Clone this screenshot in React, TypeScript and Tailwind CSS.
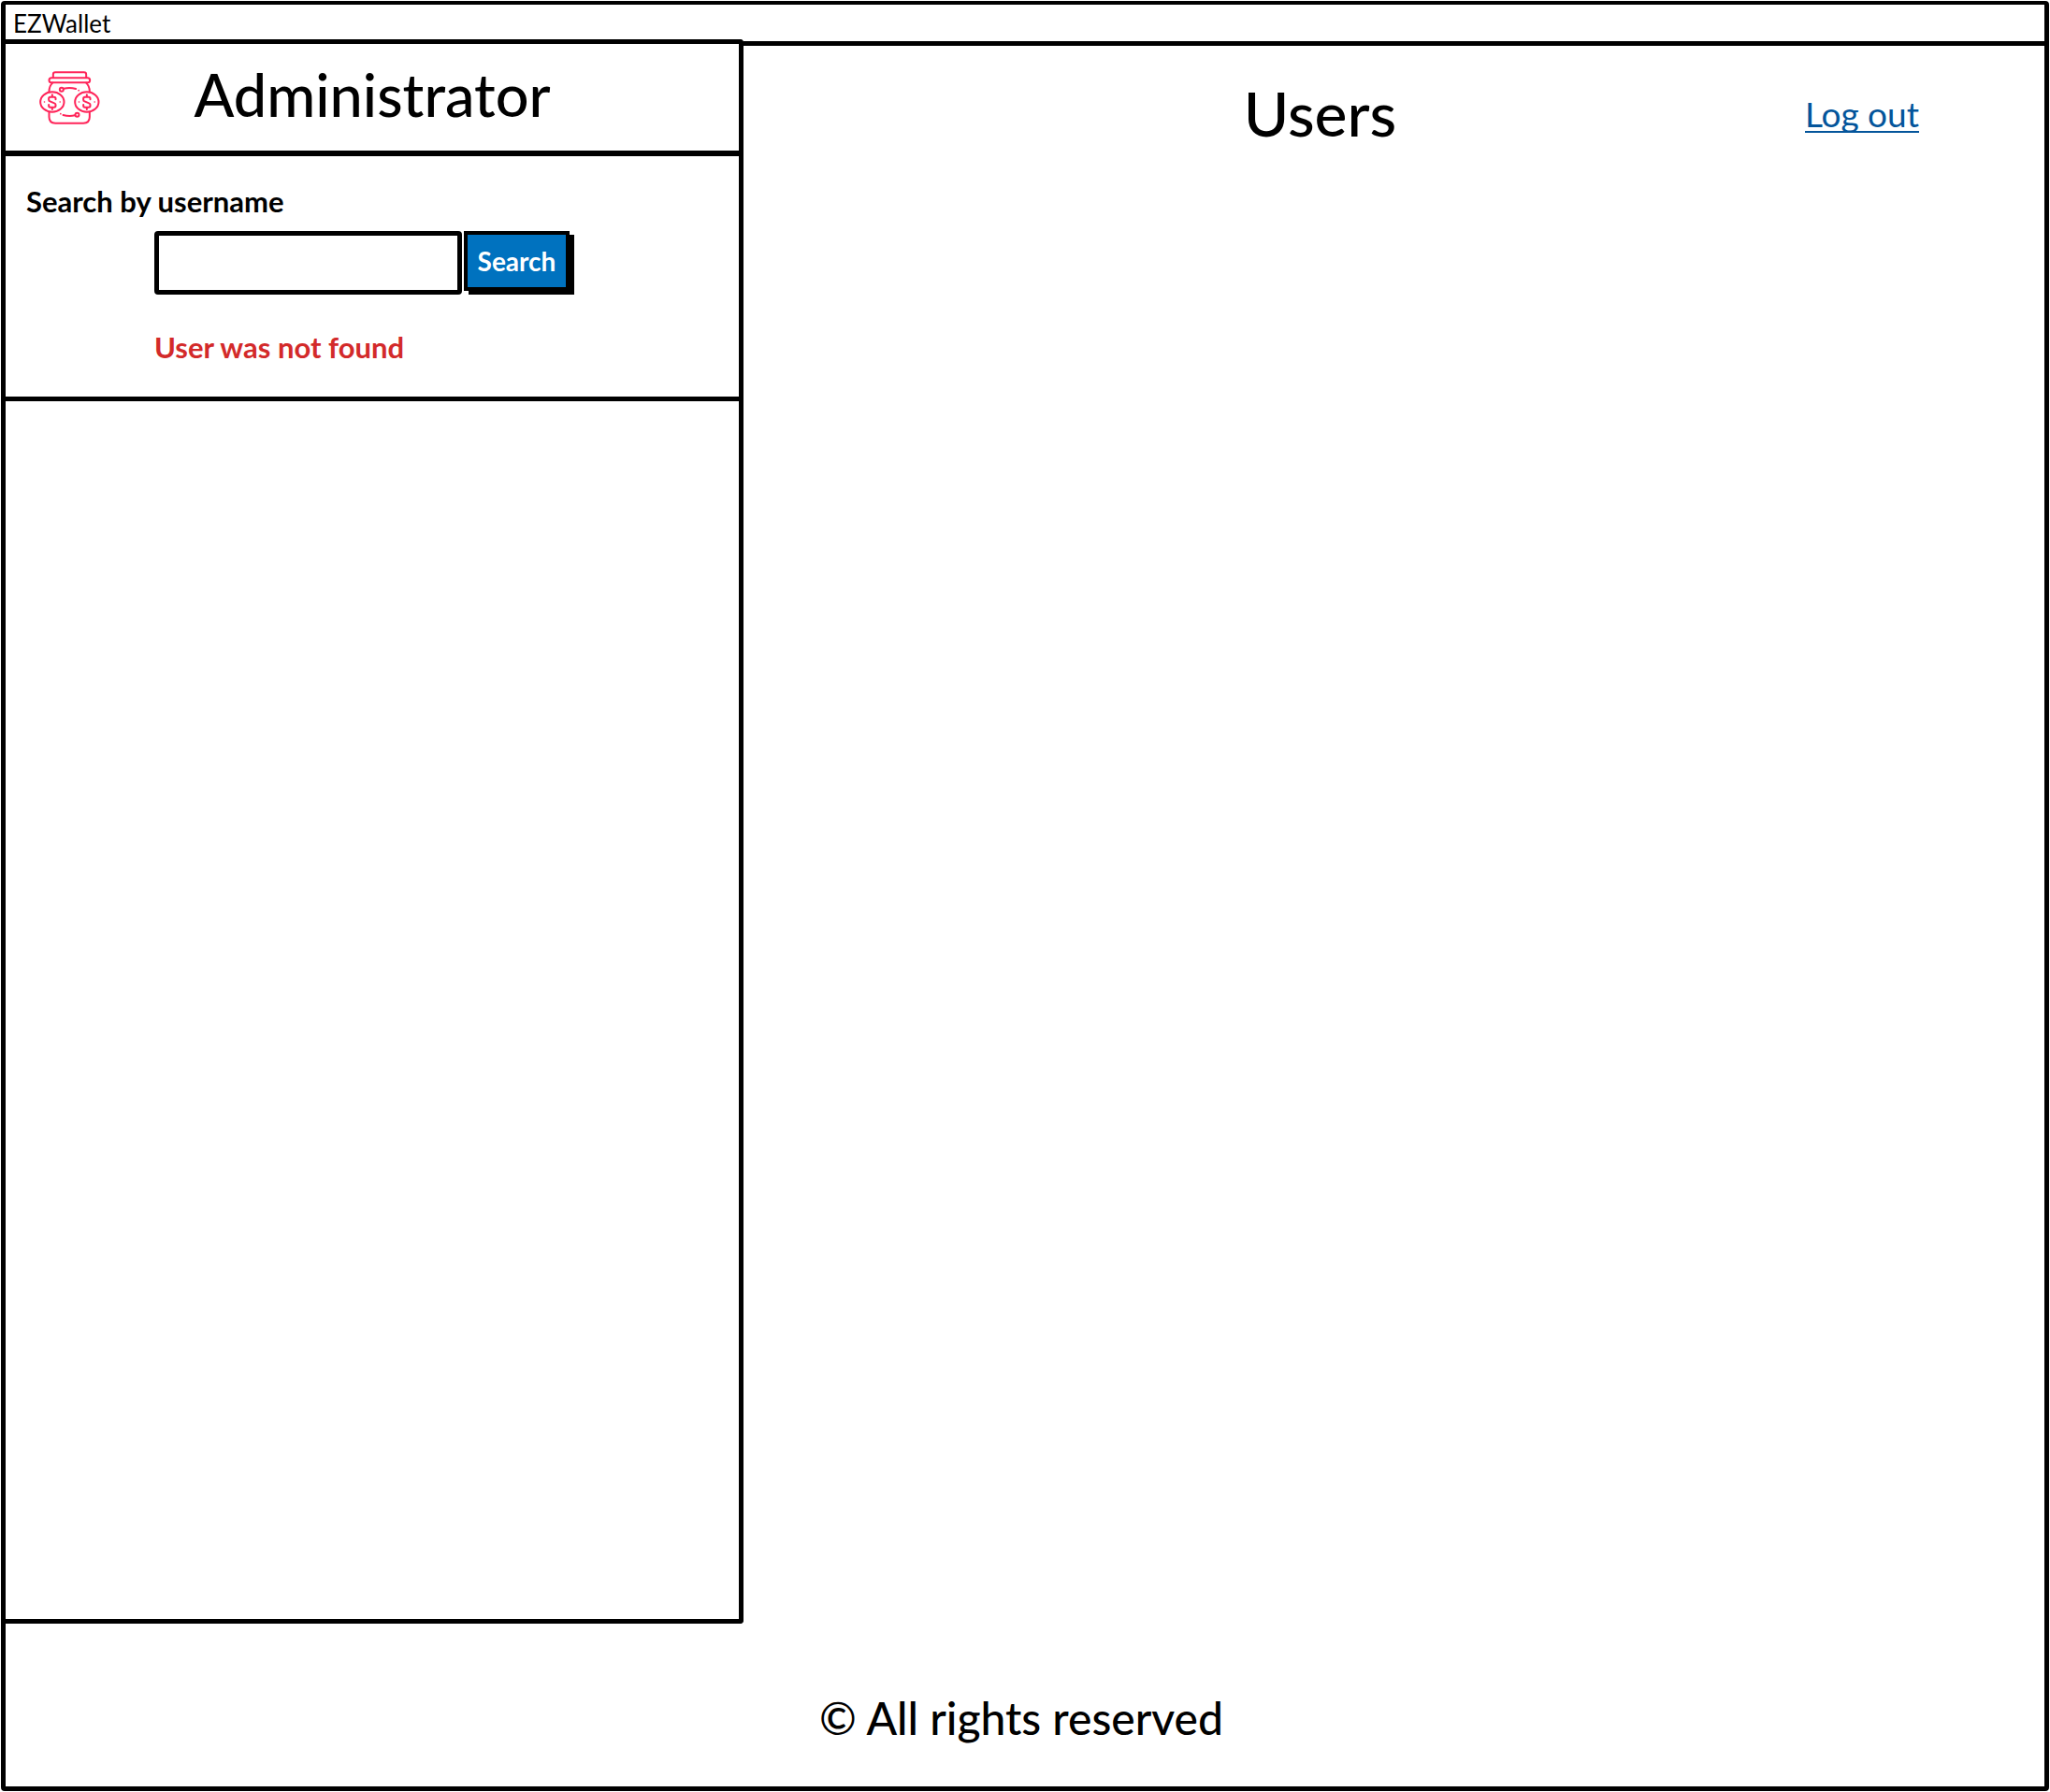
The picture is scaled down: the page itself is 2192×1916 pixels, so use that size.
import { useState } from "react";

function Coin({ x }: { x: number }) {
  return (
    <g transform={`translate(${x} 142)`}>
      <ellipse rx="38" ry="32" fill="white" />
      <circle cx="-25" cy="0" r="2.5" fill="currentColor" stroke="none" />
      <circle cx="25" cy="0" r="2.5" fill="currentColor" stroke="none" />
      <path d="M11 -8v-3a5 5 0 0 0-5-5H-6a5 5 0 0 0-5 5v4c0 3 1 4 4 5L7 4c3 1 4 3 4 5v3a5 5 0 0 1-5 5H-6a5 5 0 0 1-5-5V9M0 -16v-7M0 17v7" />
    </g>
  );
}

function JarLogo() {
  return (
    <svg
      viewBox="36 43 194 171"
      className="h-[57px] w-[65px] text-[#ff2459]"
      fill="none"
      stroke="currentColor"
      strokeWidth="6"
      strokeLinecap="round"
      strokeLinejoin="round"
      role="img"
      aria-label="EZWallet logo"
    >
      <path d="M80 64V54q0-7 7-7h92q7 0 7 7v10" />
      <rect x="67" y="65" width="131" height="15" rx="7.5" />
      <path d="M78 81Q67 92 67 108v82q0 20 20 20h90q20 0 20-20v-82q0-16-11-27" />
      <circle cx="107" cy="102" r="6" />
      <path d="M114 99q20-5 39 1" />
      <circle cx="162" cy="105" r="2.5" fill="currentColor" stroke="none" />
      <circle cx="157" cy="183" r="6" />
      <path d="M150 185q-19 5-38-1" />
      <circle cx="104" cy="180" r="2.5" fill="currentColor" stroke="none" />
      <Coin x={77} />
      <Coin x={188} />
    </svg>
  );
}

function Sidebar() {
  const [username, setUsername] = useState("");
  return (
    <aside className="flex w-[36.2%] shrink-0 flex-col rounded-r-sm border-y-[5px] border-r-[5px] border-black">
      <div className="grid h-[120px] grid-cols-[1fr_auto_1fr] items-center border-b-[6px] border-black px-9">
        <JarLogo />
        <h2 className="pb-2 text-[63px] leading-none font-medium">Administrator</h2>
      </div>
      <form
        className="flex h-[262px] flex-col border-b-[5px] border-black pt-7 pl-[22px] font-bold"
        onSubmit={(event) => event.preventDefault()}
      >
        <label htmlFor="username" className="text-[31px] leading-10">
          Search by username
        </label>
        <div className="mt-3 ml-[137px] flex gap-0.5">
          <input
            id="username"
            type="text"
            value={username}
            onChange={(event) => setUsername(event.target.value)}
            className="h-[68px] w-[329px] rounded-sm border-[5px] border-black bg-white px-3 text-[28px] outline-none"
          />
          <button
            type="submit"
            className="h-16 w-[113px] border-4 border-black bg-[#0072bf] text-[28px] text-white shadow-[5px_4px_0_0_#000]"
          >
            Search
          </button>
        </div>
        <p role="alert" className="mt-9 ml-[137px] text-[31px] leading-10 text-[#d32a2a]">
          User was not found
        </p>
      </form>
    </aside>
  );
}

export default function App() {
  return (
    <div className="flex min-h-screen flex-col bg-white p-px font-['Lato',sans-serif] text-black">
      <div className="flex flex-1 flex-col rounded-sm border-x-[5px] border-t-4 border-b-[5px] border-black">
        <header className="h-[37px] px-2 text-[26px] leading-10">EZWallet</header>
        <div className="flex flex-1">
          <Sidebar />
          <main className="mt-0.5 flex-1 border-t-[5px] border-black">
            <div className="flex items-center pt-9 pr-[134px] pl-[98px]">
              <h1 className="flex-1 text-center text-[66px] leading-[72px] font-medium">Users</h1>
              <a
                href="#logout"
                className="mt-1 border-b-2 border-[#04559b] text-[37px] leading-9 text-[#04559b]"
              >
                Log out
              </a>
            </div>
          </main>
        </div>
        <footer className="flex h-[174px] items-center justify-center pt-7 pr-2 text-[48px] font-medium">
          © All rights reserved
        </footer>
      </div>
    </div>
  );
}
